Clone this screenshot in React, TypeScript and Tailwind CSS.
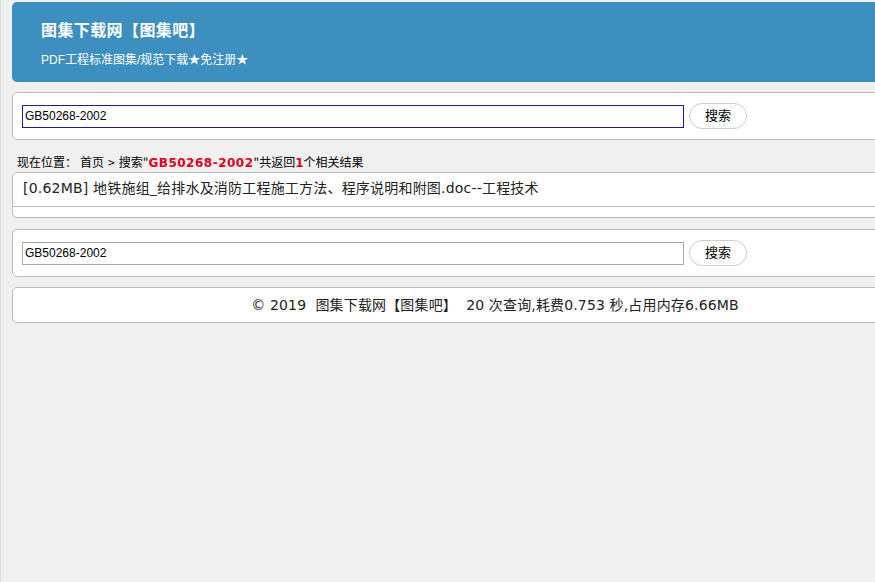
export default function App() {
  const font = "font-['Verdana','DejaVu_Sans','Noto_Sans_CJK_SC',sans-serif]";
  const arial = "font-['Liberation_Sans','Noto_Sans_CJK_SC',sans-serif]";

  const SearchBar = ({ focused }: { focused?: boolean }) => (
    <div className="w-[966px] h-[48px] bg-white border border-[#bbb] rounded-[5px] flex items-center pl-[9px]">
      <input
        type="text"
        defaultValue="GB50268-2002"
        className={`w-[662px] h-[23px] px-[2px] text-[12px] text-black bg-white outline-none ${arial} ${focused ? "border border-[#1a1a9a]" : "border border-[#aaa]"}`}
      />
      <button className={`ml-[5px] w-[58px] h-[26px] rounded-full border border-[#ccc] bg-white text-[13px] text-black ${arial}`}>
        搜索
      </button>
    </div>
  );

  return (
    <div className={`w-[875px] h-[582px] overflow-hidden bg-[#f0f0f0] border-l border-[#dcdcdc] ${font}`}>
      <div className="pl-[11px] pt-[2px]">
        {/* 头部 */}
        <header className="w-[966px] h-[80px] bg-[#3d8fc0] rounded-[5px] pl-[29px] pt-[17px] text-white">
          <h1 className="text-[16px] font-bold leading-[20px] tracking-[0.4px] font-['Noto_Sans_CJK_SC',serif]">图集下载网【图集吧】</h1>
          <p className={`mt-[13px] text-[12px] leading-[16px] ${arial}`}>PDF工程标准图集/规范下载★免注册★</p>
        </header>

        <div className="mt-[10px]">
          <SearchBar focused />
        </div>

        {/* 当前位置 */}
        <div className="mt-[14px] pl-[5px] text-[12px] leading-[16px] text-black font-['Noto_Sans_CJK_SC',sans-serif]">
          现在位置：<span className="pl-[3px]">首页</span><span className="px-[4px]">&gt;</span>搜索"<b className={`text-[#e0001b] tracking-[0.5px] ${font}`}>GB50268-2002</b>"共返回<b className={`text-[#e0001b] ${font}`}>1</b>个相关结果
        </div>

        {/* 结果 */}
        <div className="mt-px w-[966px] bg-white border border-[#bbb] rounded-[5px] pb-[10px]">
          <div className="h-[34px] border-b border-[#bbb] pl-[10px] pt-[6px] text-[14px] leading-[18px] tracking-[0.2px] text-[#222]">
            [0.62MB] 地铁施组_给排水及消防工程施工方法、程序说明和附图.doc--工程技术
          </div>
        </div>

        <div className="mt-[11px]">
          <SearchBar />
        </div>

        {/* 页脚 */}
        <div className="mt-[10px] w-[966px] h-[36px] bg-white border border-[#bbb] rounded-[5px] flex items-center justify-center text-[14px] tracking-[0.15px] text-[#222]">
          © 2019&nbsp; 图集下载网【图集吧】&nbsp; 20 次查询,耗费0.753 秒,占用内存6.66MB
        </div>
      </div>
    </div>
  );
}
